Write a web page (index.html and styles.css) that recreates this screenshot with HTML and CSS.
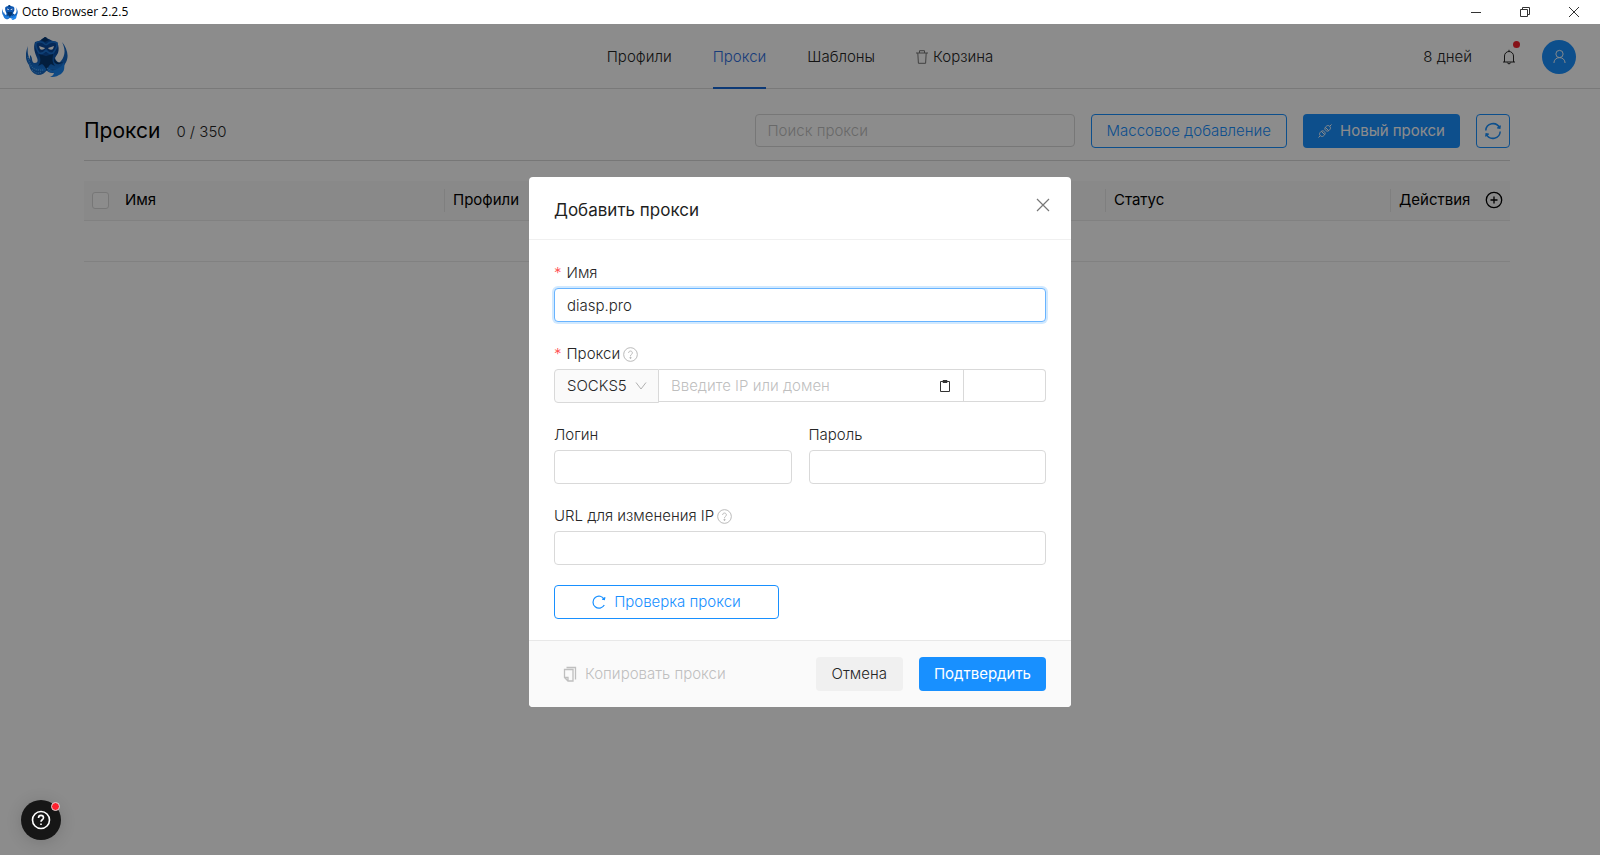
FILE: index.html
```html
<!DOCTYPE html>
<html lang="ru">
<head>
<meta charset="utf-8">
<title>Octo Browser 2.2.5</title>
<link rel="stylesheet" href="styles.css">
</head>
<body>
<svg class="defs" aria-hidden="true">
  <defs>
    <linearGradient id="octo-body" x1="0" y1="0" x2="0" y2="1">
      <stop offset="0" stop-color="#0c52ac"/><stop offset=".4" stop-color="#0a4698"/><stop offset="1" stop-color="#1a80e6"/>
    </linearGradient>
    <symbol id="octo" viewBox="0 0 42 40">
      <path fill="#1668c4" d="M2 9C-1 16-1 23 3 28c1 5 4 9 9 10 4 0 7-2 9-5l-3-4c-3 3-8 2-10-2-3-4-1-6-4-9 0 3 0 4 1 6C2 20 1 15 2 9z"/>
      <path fill="#1668c4" d="M36 5c5 6 8 15 3 22-2 4-4 7-8 8-5 2-8 1-11-2l2-6c5 2 10 1 13-3 4-5 5-11 1-19z"/>
      <path fill="url(#octo-body)" d="M9 5c3-1 5-1 7-3l3-2c2 0 2 2 4 2 3 2 5 2 8 3 2 4 2 8 1 11-1 2-2 3-3 5 1 4 5 6 8 4l-2 4c-2 3-6 4-9 3-2 1-4 3-6 1-3 2-5 1-6 0-3 1-6 0-8-3-2-2-3-5-1-8 0 3 2 4 4 4 3 0 3-3 2-5-2-5-4-10-2-16z"/>
      <path fill="#07376f" d="M13 17l7 2 7-2c0 4-2 7 2 12l-4-2c-2 1-3 3-4 7-2-4-3-6-5-7l-4 2c4-5 2-8 1-12zM28 21c2 4 5 6 9 4-3 3-8 3-9-1zM15 3l4-3 4 3-4 2z"/>
      <path fill="none" stroke="#1a74d6" stroke-width="1.600" stroke-linejoin="round" d="M20 8c-3-3-7-4-10-2-1 4 1 7 3 10 3 1 5 0 7-3 2 3 4 4 7 3 2-3 5-6 4-10-4-2-8-1-11 2"/>
      <path fill="#fff" d="M13 9l6 2c-1 2-4 2-5 1zM28 9l-6 2c1 2 4 2 5 1z"/>
      <path fill="none" stroke="#55a9f5" stroke-width="1.400" stroke-dasharray="1 1.200" d="M2 20c2 9 4 14 15 13M6 33c3 3 6 4 9 2M21 31c2 2 3 3 5 3"/>
      <path fill="#1b86f0" d="M38 25c1 7 0 11-5 13-3 2-6 2-9 2 3-1 4-3 4-5-3 1-5 0-6-1 7 0 13-3 16-9z"/>
    </symbol>
    <symbol id="question" viewBox="0 0 16 16">
      <circle cx="8" cy="8" r="7.3" fill="none" stroke="currentColor"/>
      <path fill="none" stroke="currentColor" d="M6 6.4C6 5 6.900 4.300 8 4.300s2 .8 2 2c0 1.700-2 1.500-2 3.200"/>
      <circle cx="8" cy="11.500" r=".7" fill="currentColor"/>
    </symbol>
  </defs>
</svg>

<header class="titlebar">
  <svg class="titlebar-logo" aria-hidden="true"><use href="#octo"/></svg>
  <span class="titlebar-name">Octo Browser 2.2.5</span>
  <div class="window-controls">
    <button class="window-button" aria-label="Свернуть"><svg viewBox="0 0 12 12"><path d="M1 6.500h10"/></svg></button>
    <button class="window-button" aria-label="Развернуть"><svg viewBox="0 0 12 12"><path d="M1.500 3.500h7v7h-7zM3.500 3.500v-2h7v7h-2"/></svg></button>
    <button class="window-button" aria-label="Закрыть окно"><svg viewBox="0 0 12 12"><path d="M1 1l10 10M11 1L1 11"/></svg></button>
  </div>
</header>

<div class="workspace">
  <div class="app">
    <div class="topbar">
      <svg class="logo" role="img" aria-label="Octo Browser"><use href="#octo"/></svg>
      <nav class="nav">
        <a class="nav-link" href="#">Профили</a>
        <a class="nav-link nav-link-active" href="#">Прокси</a>
        <a class="nav-link" href="#">Шаблоны</a>
        <a class="nav-link" href="#"><svg class="icon-trash" viewBox="0 0 12 14" aria-hidden="true"><path d="M0 3h12M3.500 3V.7h5V3M1.800 3l.6 10.300h7.200L10.200 3"/></svg>Корзина</a>
      </nav>
      <div class="account">
        <span class="days">8 дней</span>
        <button class="bell" aria-label="Уведомления"><svg viewBox="0 0 14 16"><path d="M1 13h12M2.500 13V7a4.500 4.500 0 0 1 9 0v6M7 2.500V.8M5.300 13.500c.3 1.800 3.100 1.800 3.400 0"/></svg><span class="bell-dot"></span></button>
        <button class="avatar" aria-label="Аккаунт"><svg viewBox="0 0 14 16"><circle cx="7" cy="5.300" r="3.900"/><path d="M1 15c0-3.500 2.700-5.800 6-5.800s6 2.300 6 5.800"/></svg></button>
      </div>
    </div>

    <main class="content">
      <div class="page-head">
        <h1 class="page-title">Прокси</h1>
        <span class="page-count">0 / 350</span>
        <div class="toolbar">
          <input class="input search" type="text" placeholder="Поиск прокси" aria-label="Поиск прокси">
          <button class="button button-outline">Массовое добавление</button>
          <button class="button button-primary"><svg class="icon" viewBox="0 0 14 14" aria-hidden="true"><path d="M7.300 3.300l3.400 3.400M3.300 7.300l3.400 3.400M7.300 3.300L8.700 2c2-1.600 4.900 1.300 3.300 3.300l-1.300 1.400M3.300 7.300L2 8.700c-1.600 2 1.300 4.900 3.300 3.300l1.400-1.300M7.300 3.300c-1.600 2 1.400 5 3.400 3.400M3.300 7.300c2-1.600 5 1.400 3.400 3.400M11.800 2.200L13.500.5M2.200 11.800L.5 13.500"/></svg>Новый прокси</button>
          <button class="button button-outline button-square" aria-label="Обновить"><svg viewBox="0 0 18 18"><path d="M1.800 8.500a7.200 7.200 0 0 1 13.700-2.700M16.200 9.500a7.200 7.200 0 0 1-13.700 2.700M16.200 3.500l-.4 2.700-2.600-.4M1.800 14.500l.4-2.700 2.600.4"/></svg></button>
        </div>
      </div>

      <table class="table">
        <thead>
          <tr>
            <th class="col-check"><input class="checkbox" type="checkbox" aria-label="Выбрать все"></th>
            <th class="col-name">Имя</th>
            <th class="col-profiles">Профили</th>
            <th class="col-status">Статус</th>
            <th class="col-actions"><div class="actions-head">Действия<button class="add-column" aria-label="Добавить столбец"><svg viewBox="0 0 18 18"><circle cx="9" cy="9" r="7.700"/><path d="M9 5.500v7M5.500 9h7"/></svg></button></div></th>
          </tr>
        </thead>
        <tbody><tr><td colspan="5"></td></tr></tbody>
      </table>
    </main>
  </div>

  <div class="overlay">
    <form class="modal" role="dialog" aria-labelledby="modal-title">
      <div class="modal-head">
        <h2 class="modal-title" id="modal-title">Добавить прокси</h2>
        <button class="modal-close" type="button" aria-label="Закрыть"><svg viewBox="0 0 14 14"><path d="M1 1l12 12M13 1L1 13"/></svg></button>
      </div>
      <div class="modal-body">
        <div class="field">
          <label class="label" for="name"><span class="required">*</span>Имя</label>
          <input class="input input-focus" id="name" type="text" value="diasp.pro">
        </div>
        <div class="field">
          <label class="label" for="host"><span class="required">*</span>Прокси<svg class="hint" aria-hidden="true"><use href="#question"/></svg></label>
          <div class="proxy-row">
            <div class="select-wrap">
              <select class="select" aria-label="Тип прокси"><option>SOCKS5</option></select>
              <svg class="select-arrow" viewBox="0 0 12 8" aria-hidden="true"><path d="M1 .5l5 6.500 5-6.500"/></svg>
            </div>
            <div class="host-wrap">
              <input class="input host" id="host" type="text" placeholder="Введите IP или домен">
              <button class="paste" type="button" aria-label="Вставить"><svg viewBox="0 0 12 14"><path d="M1.500 2.500h9v10h-9z"/><path d="M4 1.500h4v2H4z"/></svg></button>
            </div>
            <input class="input port" type="text" aria-label="Порт">
          </div>
        </div>
        <div class="field-pair">
          <div class="field">
            <label class="label" for="login">Логин</label>
            <input class="input" id="login" type="text">
          </div>
          <div class="field">
            <label class="label" for="password">Пароль</label>
            <input class="input" id="password" type="password">
          </div>
        </div>
        <div class="field">
          <label class="label" for="url">URL для изменения IP<svg class="hint" aria-hidden="true"><use href="#question"/></svg></label>
          <input class="input" id="url" type="text">
        </div>
        <button class="button button-outline button-check" type="button"><svg class="icon" viewBox="0 0 14 14" aria-hidden="true"><path stroke-width="1.200" d="M12.300 4.300A6 6 0 1 0 12.300 10M12.900 2.200l-.5 2.300-2.300-.4"/></svg>Проверка прокси</button>
      </div>
      <div class="modal-foot">
        <button class="button button-text" type="button" disabled><svg class="icon" viewBox="0 0 14 16" aria-hidden="true"><path stroke-width="1.300" d="M1.500 3.500h8.500v11.500H5l-3.500-3.500zM1.500 11.500H5V15M3.500 1.500h9v12"/></svg>Копировать прокси</button>
        <button class="button button-cancel" type="button">Отмена</button>
        <button class="button button-primary" type="submit">Подтвердить</button>
      </div>
    </form>
  </div>

  <button class="help" aria-label="Помощь"><svg viewBox="0 0 20 20"><circle cx="10" cy="10" r="8.500"/><path d="M7.500 8c0-1.700 1.100-2.600 2.500-2.600s2.500 1 2.500 2.400c0 2-2.500 1.900-2.500 3.900M10 13.500v1.500"/></svg><span class="help-dot"></span></button>
</div>
</body>
</html>
```

FILE: styles.css
```css
* { box-sizing: border-box; }

body {
  margin: 0;
  min-height: 100vh;
  display: flex;
  flex-direction: column;
  font-family: Inter, "Liberation Sans", sans-serif;
  font-size: 15px;
  font-weight: 300;
  line-height: 24px;
  color: #262626;
}

button, input, select { font: inherit; color: inherit; margin: 0; }
button { padding: 0; border: 0; background: none; }
svg { display: block; fill: none; stroke: currentColor; }
.defs { position: absolute; width: 0; height: 0; }

/* Window title bar */
.titlebar { display: flex; align-items: center; height: 24px; padding-left: 2px; background: #fff; }
.titlebar-logo { width: 16px; height: 15px; stroke: none; }
.titlebar-name { margin-left: 4px; font-family: "Open Sans", "Noto Sans", sans-serif; font-size: 12px; font-weight: 400; color: #000; }
.window-controls { display: flex; margin-left: auto; padding-right: 2px; }
.window-button { display: grid; place-items: center; width: 49px; height: 24px; color: #333; }
.window-button svg { width: 12px; height: 12px; }

.workspace { position: relative; flex: 1; display: flex; }
.app { flex: 1; }

/* Navigation */
.topbar {
  display: grid;
  grid-template-columns: 1fr auto 1fr;
  align-items: center;
  height: 65px;
  padding: 0 24px;
  border-bottom: 1px solid #dcdcdc;
}
.logo { width: 42px; height: 40px; margin-left: 2px; stroke: none; }
.nav { display: flex; gap: 41px; height: 65px; }
.nav-link { display: flex; align-items: center; gap: 5px; padding-top: 2px; border-bottom: 2px solid transparent; color: #262626; text-decoration: none; }
.nav-link-active { color: #2f6fe0; border-color: #1769d8; }
.icon-trash { width: 12px; height: 14px; color: #777; }
.account { display: flex; align-items: center; justify-content: flex-end; }
.days { margin-right: 30px; }
.bell { position: relative; margin-right: 26px; }
.bell svg { width: 14px; height: 16px; }
.bell-dot { position: absolute; top: -8px; right: -4px; width: 7px; height: 7px; border-radius: 50%; background: #f5222d; }
.avatar { display: grid; place-items: center; width: 34px; height: 34px; border-radius: 50%; background: #1890ff; color: #fff; }
.avatar svg { width: 13px; height: 15px; }

/* Page */
.content { padding: 25px 90px 0 84px; }
.page-head { display: flex; align-items: center; padding-bottom: 12px; border-bottom: 1px solid #d9d9d9; }
.page-title { margin: 0; font-size: 21px; font-weight: 400; color: #000; }
.page-count { margin-left: 16px; padding-top: 2px; }
.toolbar { display: flex; gap: 16px; margin-left: auto; }

.input {
  width: 100%;
  height: 34px;
  padding: 0 12px;
  border: 1px solid #d9d9d9;
  border-radius: 4px;
  background: #fff;
  outline: 0;
}
.input::placeholder { color: #bfbfbf; opacity: 1; }
.input-focus { border-color: #69b4ff; box-shadow: 0 0 0 2px #d1e9ff; }
.search { width: 320px; height: 33px; }

.button {
  display: flex;
  align-items: center;
  justify-content: center;
  gap: 8px;
  height: 34px;
  padding: 0 15px;
  border: 1px solid transparent;
  border-radius: 4px;
  white-space: nowrap;
}
.button-outline { border-color: #1890ff; color: #1890ff; }
.button-primary { padding: 0 14px; background: #1890ff; color: #fff; font-weight: 400; }
.button-cancel { background: #f0f0f0; }
.button-text { color: #bfbfbf; padding: 0 8px; margin-right: auto; }
.button-square { width: 34px; padding: 0; }
.button-square svg { width: 18px; height: 18px; stroke-width: 1.5; }
.button-check { width: 225px; }
.icon { width: 14px; height: 16px; }

.table { width: 100%; margin-top: 20px; border-collapse: collapse; table-layout: fixed; }
.table th { position: relative; height: 39px; padding: 0 9px; background: #fafafa; border-bottom: 1px solid #ebebeb; text-align: left; font-weight: 400; color: #000; }
.table td { height: 41px; border-bottom: 1px solid #ebebeb; }
.table th + th + th::before { content: ""; position: absolute; left: 0; top: 8px; bottom: 8px; width: 1px; background: #e8e8e8; }
.table .col-check { width: 41px; padding: 0 8px; }
.table .col-name { width: 319px; padding: 0; }
.col-profiles { width: 661px; }
.col-status { width: 285px; }
.table .col-actions { padding-right: 7px; }
.checkbox { display: block; appearance: none; width: 17px; height: 17px; border: 1px solid #d9d9d9; border-radius: 3px; background: #fff; }
.actions-head { display: flex; align-items: center; justify-content: space-between; }
.add-column svg { width: 18px; height: 18px; stroke-width: 1.3; }

/* Dialog */
.overlay { position: absolute; inset: 0; display: flex; align-items: flex-start; justify-content: center; padding-top: 153px; background: rgba(0, 0, 0, .45); }
.modal { width: 542px; border-radius: 4px; overflow: hidden; background: #fff; }
.modal-head { display: flex; align-items: flex-start; justify-content: space-between; padding: 21px 21px 17px 25px; border-bottom: 1px solid #f0f0f0; }
.modal-title { margin: 0; font-size: 17px; font-weight: 400; color: #1f1f1f; }
.modal-close { color: #777; }
.modal-close svg { width: 14px; height: 14px; stroke-width: 1.2; }
.modal-body { display: flex; flex-direction: column; gap: 20px; padding: 21px 25px; }
.field { display: flex; flex-direction: column; gap: 3px; flex: 1; }
.field-pair { display: flex; gap: 17px; }
.label { display: flex; align-items: center; }
.required { margin-right: 5px; color: #ff4d4f; }
.hint { width: 15px; height: 15px; margin-left: 3px; color: #b5b5b5; }
.proxy-row { display: flex; }
.select-wrap { position: relative; width: 105px; }
.select { width: 100%; height: 34px; padding: 0 12px; appearance: none; border: 1px solid #d9d9d9; border-radius: 4px 0 0 4px; background: #fafafa; }
.select-arrow { position: absolute; right: 12px; top: 13px; width: 12px; height: 8px; color: #b0b0b0; }
.host-wrap { position: relative; flex: 1; }
.host { height: 33px; border-left: 0; border-radius: 0; }
.paste { position: absolute; right: 13px; top: 10px; color: #333; }
.paste svg { width: 12px; height: 14px; }
.port { width: 82px; height: 33px; border-left: 0; border-radius: 0 4px 4px 0; }
.modal-foot { display: flex; gap: 16px; padding: 16px 25px; border-top: 1px solid #e8e8e8; background: #fafafa; }

/* Help bubble */
.help { position: absolute; left: 21px; bottom: 15px; display: grid; place-items: center; width: 40px; height: 40px; border-radius: 50%; background: #161616; color: #fff; box-shadow: 0 2px 16px rgba(0, 0, 0, .15); }
.help svg { width: 20px; height: 20px; stroke-width: 1.6; }
.help-dot { position: absolute; top: 2px; right: 1px; width: 9px; height: 9px; border: 1px solid #ddd; border-radius: 50%; background: #ff1f2d; }
```
